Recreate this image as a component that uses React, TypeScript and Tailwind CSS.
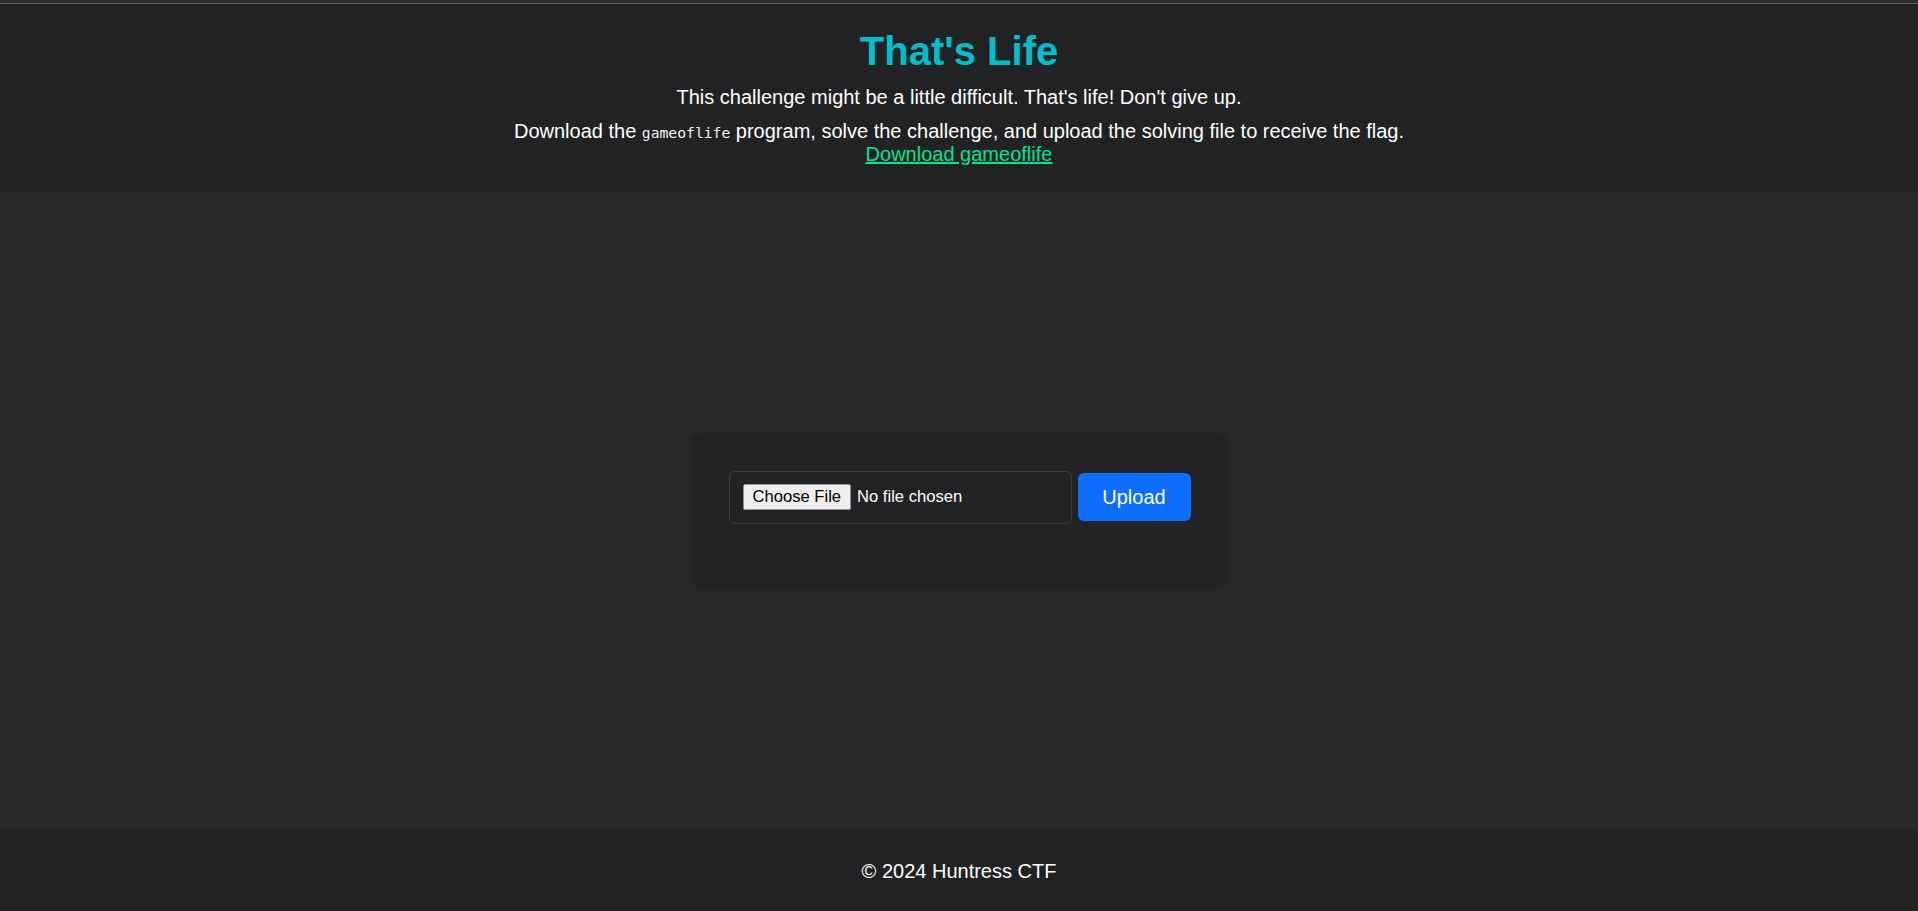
import React from 'react';

const App: React.FC = () => {
  return (
    <div className="h-screen flex flex-col bg-[#27282a] text-white font-['Liberation_Sans',Arial,sans-serif]">
      {/* window edge */}
      <div className="h-[4px] bg-[#2c2c2c] border-b border-[#626262]" />

      <header className="bg-[#212224] text-center pt-[24px] pb-[26px]">
        <h1 className="text-[40px] leading-[46px] font-bold text-[#00bfcc]">That's Life</h1>
        <p className="mt-[12px] text-[20px] leading-[23px]">
          This challenge might be a little difficult. That's life! Don't give up.
        </p>
        <p className="mt-[11px] text-[20px] leading-[23px]">
          Download the{' '}
          <code className="font-['DejaVu_Sans_Mono',monospace] text-[14.7px] leading-none text-[#f2f2f2]">gameoflife</code>{' '}
          program, solve the challenge, and upload the solving file to receive the flag.
          <br />
          <a href="#" className="text-[#00e68f] underline">Download gameoflife</a>
        </p>
      </header>

      <main className="flex-1 flex items-center justify-center">
        <div className="relative w-[535px] rounded-[10px] bg-[#212224] shadow-[0_0_10px_rgba(0,0,0,0.18)] pt-[37px] pb-[63px] pl-[37px] pr-[36px]">
          <span className="absolute left-[405px] top-[18px] w-px h-px bg-[#7a1c1c]" />
          <form className="flex items-center gap-[6px]" onSubmit={(e) => e.preventDefault()}>
            <input
              type="file"
              className="w-[343px] h-[53px] px-[13px] py-[12px] rounded-[6px] border border-[#3b3c3e] bg-[#212224] text-white text-[16.6px] leading-[26px] file:bg-[#efefef] file:text-black file:border file:border-[#8f8f8f] file:rounded-[2px] file:px-[9px] file:py-[3px] file:leading-[18px] file:mr-[6px]"
            />
            <button
              type="submit"
              className="w-[113px] h-[48px] rounded-[6px] bg-[#0d6efd] text-white text-[20px] flex items-center justify-center"
            >
              Upload
            </button>
          </form>
        </div>
      </main>

      <footer className="bg-[#212224] text-center pt-[32px] pb-[28px]">
        <p className="text-[20px] leading-[23px]">&copy; 2024 Huntress CTF</p>
      </footer>
    </div>
  );
};

export default App;
